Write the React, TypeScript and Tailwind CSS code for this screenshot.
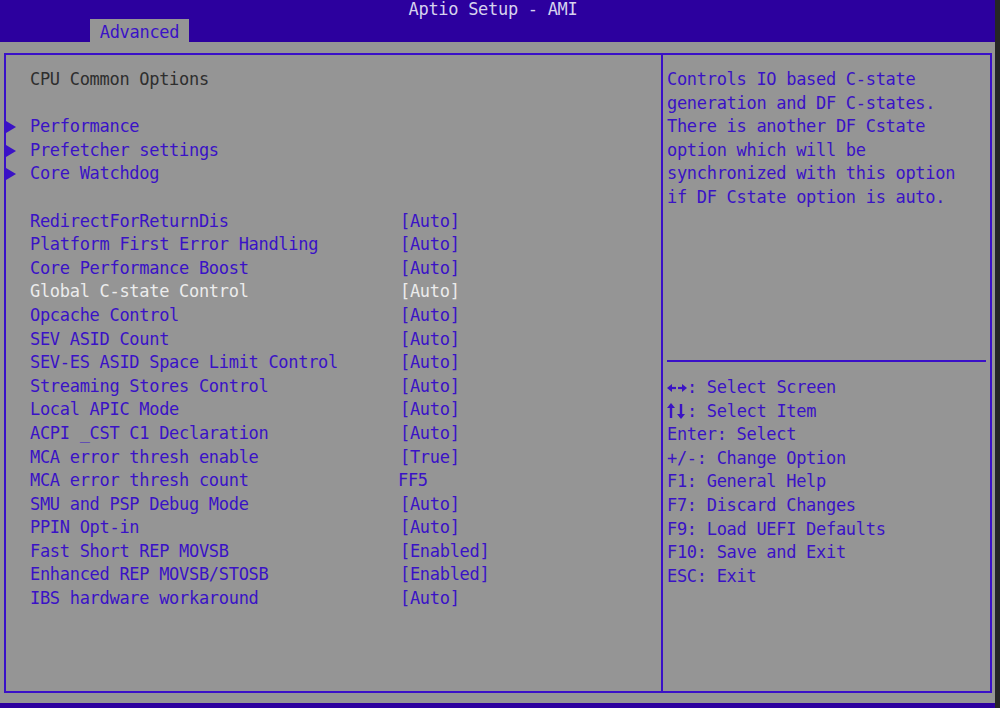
import React from "react";

const items: [string, string, boolean?][] = [
  ["RedirectForReturnDis", "[Auto]"],
  ["Platform First Error Handling", "[Auto]"],
  ["Core Performance Boost", "[Auto]"],
  ["Global C-state Control", "[Auto]", true],
  ["Opcache Control", "[Auto]"],
  ["SEV ASID Count", "[Auto]"],
  ["SEV-ES ASID Space Limit Control", "[Auto]"],
  ["Streaming Stores Control", "[Auto]"],
  ["Local APIC Mode", "[Auto]"],
  ["ACPI _CST C1 Declaration", "[Auto]"],
  ["MCA error thresh enable", "[True]"],
  ["MCA error thresh count", "FF5"],
  ["SMU and PSP Debug Mode", "[Auto]"],
  ["PPIN Opt-in", "[Auto]"],
  ["Fast Short REP MOVSB", "[Enabled]"],
  ["Enhanced REP MOVSB/STOSB", "[Enabled]"],
  ["IBS hardware workaround", "[Auto]"],
];

const helpTop = [
  "Controls IO based C-state",
  "generation and DF C-states.",
  "There is another DF Cstate",
  "option which will be",
  "synchronized with this option",
  "if DF Cstate option is auto.",
];

const keys = [
  "Enter: Select",
  "+/-: Change Option",
  "F1: General Help",
  "F7: Discard Changes",
  "F9: Load UEFI Defaults",
  "F10: Save and Exit",
  "ESC: Exit",
];

const BLUE = "#3a12c6";

function Tri() {
  return (
    <svg width="10" height="12" viewBox="0 0 10 12" className="block">
      <polygon points="0,0 10,6 0,12" fill={BLUE} />
    </svg>
  );
}

function LeftRight() {
  return (
    <svg width="20" height="14" viewBox="0 0 20 14" className="block">
      <line x1="3" y1="7" x2="9" y2="7" stroke={BLUE} strokeWidth="2.2" />
      <polygon points="0,7 5,3 5,11" fill={BLUE} />
      <line x1="11" y1="7" x2="17" y2="7" stroke={BLUE} strokeWidth="2.2" />
      <polygon points="20,7 15,3 15,11" fill={BLUE} />
    </svg>
  );
}

function UpDown() {
  return (
    <svg width="20" height="16" viewBox="0 0 20 16" className="block">
      <line x1="4" y1="3" x2="4" y2="15" stroke={BLUE} strokeWidth="2.4" />
      <polygon points="4,0 0,5 8,5" fill={BLUE} />
      <line x1="14" y1="1" x2="14" y2="13" stroke={BLUE} strokeWidth="2.4" />
      <polygon points="14,16 10,11 18,11" fill={BLUE} />
    </svg>
  );
}

export default function App() {
  const font = { fontFamily: '"DejaVu Sans Mono", "Liberation Mono", monospace' };
  return (
    <div
      className="w-[1000px] h-[708px] flex bg-[#262626] text-[17px] tracking-[-0.3px] leading-[23.6px] overflow-hidden"
      style={font}
    >
      <div className="w-[995px] flex flex-col">
        <div className="h-[42px] bg-[#2c009e] flex flex-col">
          <div className="h-[19px] leading-[19px] text-center text-[#d6d2ee] pr-[9px]">
            Aptio Setup - AMI
          </div>
          <div className="h-[23px] flex">
            <div className="ml-[90px] w-[99px] bg-[#959595] text-[#3a12c6] leading-[23px] pt-[2px] text-center">
              Advanced
            </div>
          </div>
        </div>
        <div className="flex-1 bg-[#959595] pt-[11px] pl-[4px]">
          <div className="w-[988px] h-[640px] border-2 border-[#3a10c8] flex">
            <div className="w-[657px] border-r-2 border-[#3a10c8] pt-[13px]">
              <div className="pl-[24px] text-[#2e2e2e]">CPU Common Options</div>
              <div className="h-[23.6px]" />
              {["Performance", "Prefetcher settings", "Core Watchdog"].map((t) => (
                <div key={t} className="flex items-center text-[#3a12c6]">
                  <div className="w-[24px] flex items-center">
                    <Tri />
                  </div>
                  <span>{t}</span>
                </div>
              ))}
              <div className="h-[23.6px]" />
              {items.map(([n, v, hl]) => (
                <div
                  key={n}
                  className={
                    "flex pl-[24px] " + (hl ? "text-[#ececec]" : "text-[#3a12c6]")
                  }
                >
                  <span className="w-[370px]">{n}</span>
                  <span className={v === "FF5" ? "-ml-[2px]" : ""}>{v}</span>
                </div>
              ))}
            </div>
            <div className="flex-1 flex flex-col text-[#3a12c6]">
              <div className="h-[305px] pt-[13px] pl-[4px]">
                {helpTop.map((t) => (
                  <div key={t}>{t}</div>
                ))}
              </div>
              <div className="h-[2px] bg-[#3a10c8] ml-[4px] mr-[4px]" />
              <div className="pt-[14px] pl-[4px]">
                <div className="flex items-center">
                  <span className="w-[20px]">
                    <LeftRight />
                  </span>
                  <span>: Select Screen</span>
                </div>
                <div className="flex items-center">
                  <span className="w-[20px]">
                    <UpDown />
                  </span>
                  <span>: Select Item</span>
                </div>
                {keys.map((t) => (
                  <div key={t}>{t}</div>
                ))}
              </div>
            </div>
          </div>
        </div>
        <div className="h-[5px] bg-[#2c009e]" />
      </div>
    </div>
  );
}
